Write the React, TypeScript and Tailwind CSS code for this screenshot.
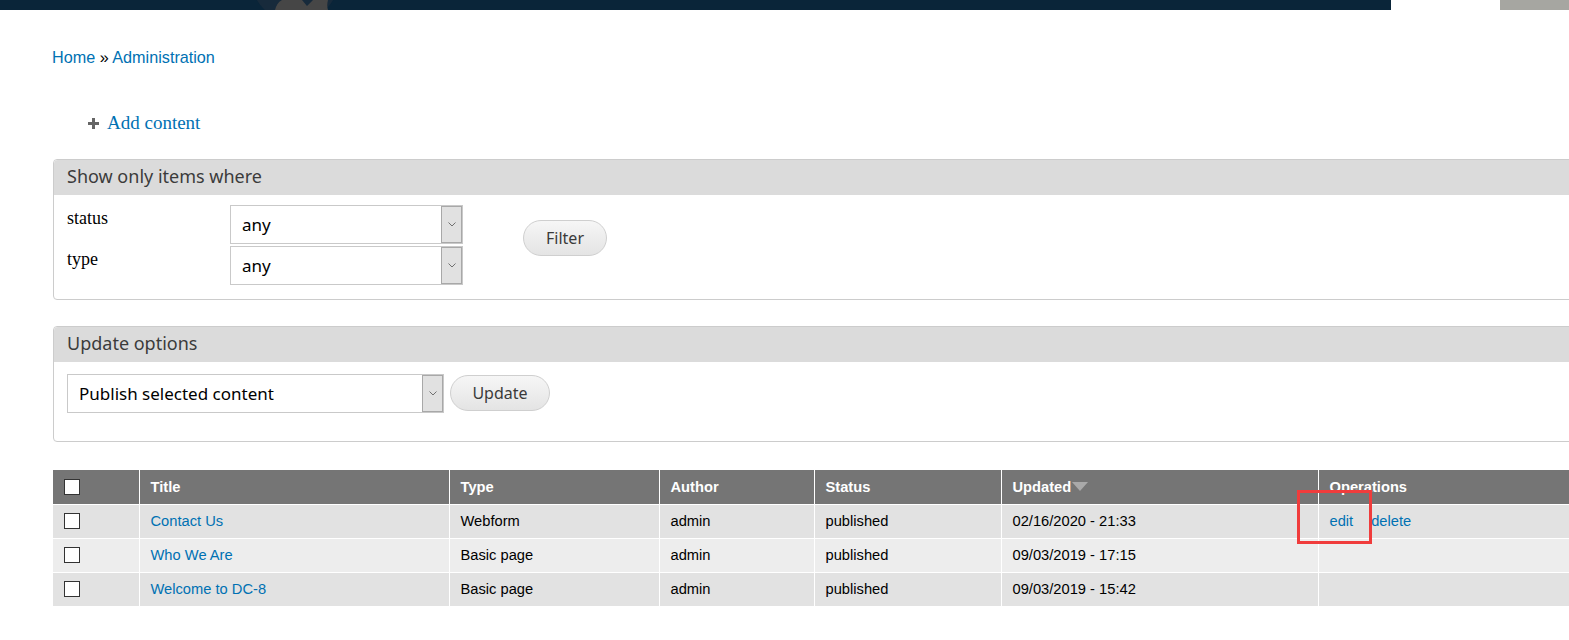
import React from 'react';

const link = 'text-[#0071b3]';

const Chevron = () => (
  <svg width="8" height="5" viewBox="0 0 8 5" fill="none" stroke="#707070" strokeWidth="1">
    <polyline points="0.5 0.5 4 4 7.5 0.5" />
  </svg>
);

const Select: React.FC<{ value: string; width: string }> = ({ value, width }) => (
  <div className={`flex h-[39px] ${width} border border-[#c9c9c9] bg-white`}>
    <div className="flex flex-1 items-center pl-[11px] text-[17px] text-black font-['Noto_Sans',sans-serif]">{value}</div>
    <div className="flex w-[21px] items-center justify-center border border-[#a8a8a8] bg-[#e1e1e1]">
      <Chevron />
    </div>
  </div>
);

const PillButton: React.FC<{ label: string; width: string }> = ({ label, width }) => (
  <button className={`h-[36px] ${width} rounded-full border border-[#cfcfcf] bg-gradient-to-b from-[#f6f6f6] to-[#e4e4e4] text-[16px] text-[#3a3a3a] font-['Noto_Sans',sans-serif]`}>
    {label}
  </button>
);

const Legend: React.FC<{ title: string }> = ({ title }) => (
  <div className="h-[35px] rounded-t-[4px] bg-[#dbdbdb] px-[13px] text-[18px] leading-[32px] text-[#3b3b3b] font-['Noto_Sans',sans-serif]">
    {title}
  </div>
);

const Checkbox = () => <div className="h-[16px] w-[16px] border border-[#333] bg-white" />;

const rows = [
  { title: 'Contact Us', type: 'Webform', updated: '02/16/2020 - 21:33', ops: true, bg: 'bg-[#e2e2e2]' },
  { title: 'Who We Are', type: 'Basic page', updated: '09/03/2019 - 17:15', ops: false, bg: 'bg-[#ededed]' },
  { title: 'Welcome to DC-8', type: 'Basic page', updated: '09/03/2019 - 15:42', ops: false, bg: 'bg-[#e2e2e2]' },
];

export default function App() {
  return (
    <div className="w-full min-h-[640px] overflow-hidden bg-white font-['Liberation_Sans',Arial,sans-serif]">
      {/* top strip */}
      <div className="flex h-[10px]">
        <div className="relative w-[1391px] overflow-hidden bg-[#0a2539]">
          <svg className="absolute left-[256px] top-0" width="80" height="10" viewBox="0 0 80 10">
            <circle cx="39" cy="-22" r="44" fill="#172a3b" />
            <path d="M19 10 C20 6 22 2 26 0 L46 0 L51 6 L57 0 L72 0 C71 4 71 7 72 10 Z" fill="#464646" />
          </svg>
        </div>
        <div className="w-[109px] bg-white" />
        <div className="flex-1 bg-[#a6a6a1]" />
      </div>

      <div className="pl-[53px]">
        <div className="mt-[38px] -ml-[1px] h-[18px] text-[16.2px] leading-[18px]">
          <span className={link}>Home</span> <span className="text-black">»</span> <span className={link}>Administration</span>
        </div>

        <div className="mt-[46px] ml-[35px] flex h-[22px] items-center gap-[8px]">
          <svg width="11" height="11" viewBox="0 0 11 11">
            <path d="M4 0h3v4h4v3H7v4H4V7H0V4h4z" fill="#666" />
          </svg>
          <span className={`${link} text-[19px] font-['Liberation_Serif',serif]`}>Add content</span>
        </div>

        {/* filter fieldset */}
        <div className="mt-[25px] w-[1580px] rounded-[4px] border border-[#cccccc]">
          <Legend title="Show only items where" />
          <div className="flex px-[13px] pt-[10px] pb-[14px]">
            <div className="flex flex-col gap-[2px]">
              <div className="flex h-[39px]">
                <div className="w-[163px] pt-[3px] text-[18px] leading-[20px] text-black font-['Liberation_Serif',serif]">status</div>
                <Select value="any" width="w-[233px]" />
              </div>
              <div className="flex h-[39px]">
                <div className="w-[163px] pt-[3px] text-[18px] leading-[20px] text-black font-['Liberation_Serif',serif]">type</div>
                <Select value="any" width="w-[233px]" />
              </div>
            </div>
            <div className="ml-[60px] mt-[15px]">
              <PillButton label="Filter" width="w-[84px]" />
            </div>
          </div>
        </div>

        {/* update fieldset */}
        <div className="mt-[26px] w-[1580px] rounded-[4px] border border-[#cccccc]">
          <Legend title="Update options" />
          <div className="flex items-start gap-[6px] px-[13px] pt-[12px] pb-[28px]">
            <Select value="Publish selected content" width="w-[377px]" />
            <div className="mt-[1px]">
              <PillButton label="Update" width="w-[100px]" />
            </div>
          </div>
        </div>

        {/* content table */}
        <div className="relative mt-[28px] w-[1580px]">
          <table className="w-full border-collapse text-[14.7px]">
            <thead>
              <tr className="h-[34px] bg-[#757575] text-left font-bold text-white">
                <th className="w-[86px] border-r border-white pl-[11px]"><Checkbox /></th>
                <th className="w-[310px] border-r border-white pl-[11px]">Title</th>
                <th className="w-[210px] border-r border-white pl-[11px]">Type</th>
                <th className="w-[155px] border-r border-white pl-[11px]">Author</th>
                <th className="w-[187px] border-r border-white pl-[11px]">Status</th>
                <th className="w-[317px] border-r border-white pl-[11px]">
                  <span className="inline-flex items-center gap-[1px]">
                    Updated
                    <svg width="16" height="9" viewBox="0 0 16 9"><path d="M0 0h16L8 9z" fill="#a9a9a9" /></svg>
                  </span>
                </th>
                <th className="pl-[11px]">Operations</th>
              </tr>
            </thead>
            <tbody>
              {rows.map((r) => (
                <tr key={r.title} className={`h-[34px] border-t border-white ${r.bg} text-black`}>
                  <td className="border-r border-white pl-[11px]"><Checkbox /></td>
                  <td className={`border-r border-white pl-[11px] ${link}`}>{r.title}</td>
                  <td className="border-r border-white pl-[11px]">{r.type}</td>
                  <td className="border-r border-white pl-[11px]">admin</td>
                  <td className="border-r border-white pl-[11px]">published</td>
                  <td className="border-r border-white pl-[11px]">{r.updated}</td>
                  <td className="pl-[11px]">
                    {r.ops && (
                      <span className={link}>
                        edit<span className="ml-[18px]">delete</span>
                      </span>
                    )}
                  </td>
                </tr>
              ))}
            </tbody>
          </table>
          {/* annotation box */}
          <div className="absolute left-[1244px] top-[20px] h-[54px] w-[75px] border-[3px] border-[#f03c3c]" />
        </div>
      </div>
    </div>
  );
}
